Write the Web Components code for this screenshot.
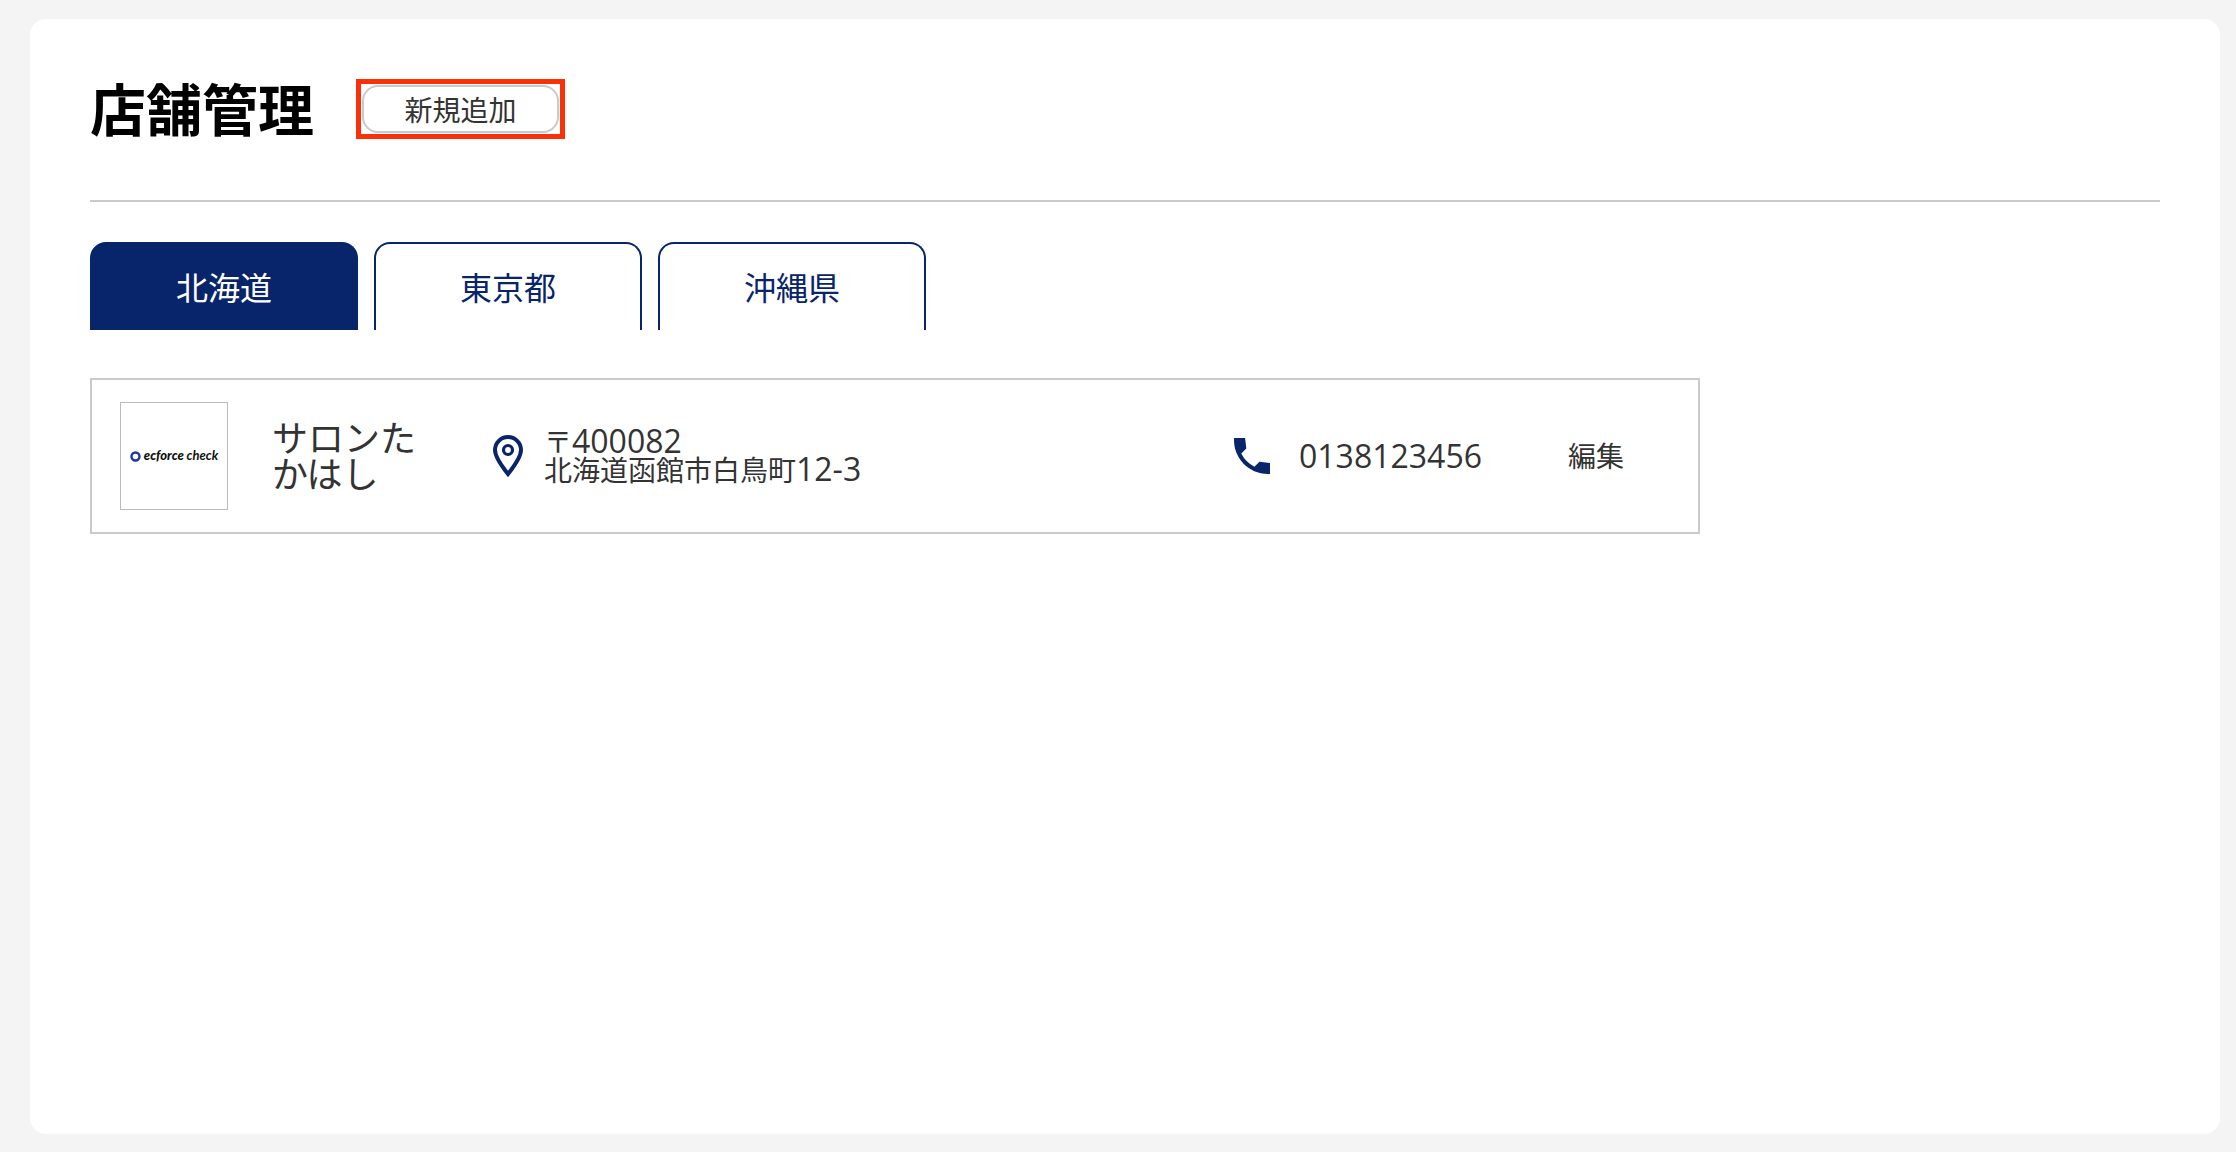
<!DOCTYPE html>
<html lang="ja">
<head>
<meta charset="utf-8">
<title>店舗管理</title>
<style>
  :root {
    --navy: #08246b;
    --line: #c9c9ce;
    --ink: #333;
    --digits: 400 32px "Open Sans", sans-serif;
  }
  body {
    margin: 0;
    background: #f4f4f4;
    color: var(--ink);
    font: 28px/28px "Noto Sans CJK JP", sans-serif;
  }
</style>
</head>
<body>
<store-panel>
  <page-header slot="header" heading="店舗管理">
    <add-button>新規追加</add-button>
  </page-header>
  <prefecture-tabs slot="tabs">
    <prefecture-tab selected>北海道</prefecture-tab>
    <prefecture-tab>東京都</prefecture-tab>
    <prefecture-tab>沖縄県</prefecture-tab>
  </prefecture-tabs>
  <store-card>
    <shop-logo slot="logo"></shop-logo>
    <span slot="name">サロンたかはし</span>
    <store-address slot="address" postal="400082" area="北海道函館市白鳥町" block="12-3"></store-address>
    <store-phone slot="phone" number="0138123456"></store-phone>
  </store-card>
</store-panel>

<script>
  const define = (name, render) => customElements.define(name, class extends HTMLElement {
    connectedCallback() {
      if (!this.shadowRoot) this.attachShadow({ mode: 'open' }).innerHTML =
        '<style>*{box-sizing:border-box}:host{box-sizing:border-box}</style>' + render(this);
    }
  });

  define('store-panel', () => `
    <style>
      :host { display: flex; flex-direction: column; min-height: calc(100vh - 37px);
        margin: 19px 16px 18px 30px; padding: 60px; border-radius: 16px; background: #fff; }
      nav { margin: 40px 0 48px; }
    </style>
    <slot name="header"></slot>
    <nav><slot name="tabs"></slot></nav>
    <main><slot></slot></main>`);

  define('page-header', el => `
    <style>
      :host { display: flex; align-items: center; gap: 42px; padding-bottom: 61px;
        border-bottom: 2px solid var(--line); }
      h1 { margin: 0; padding-bottom: 4px; color: #000; font-size: 56px; line-height: 56px; font-weight: 700; }
    </style>
    <h1>${el.getAttribute('heading')}</h1><slot></slot>`);

  define('add-button', () => `
    <style>
      :host { display: block; padding: 1px; border: 5px solid #fa3008; }
      button { display: block; width: 197px; height: 48px; padding: 0; border: 2px solid var(--line);
        border-radius: 16px; background: #fff; color: inherit; font: inherit; cursor: pointer; }
    </style>
    <button type="button"><slot></slot></button>`);

  define('prefecture-tabs', () => `
    <style>:host { display: flex; gap: 16px; }</style>
    <slot></slot>`);

  define('prefecture-tab', () => `
    <style>
      :host { display: block; width: 268px; }
      button { display: block; width: 100%; height: 88px; padding: 0 0 2px; border: 2px solid var(--navy);
        border-bottom: 0; border-radius: 16px 16px 0 0; background: #fff; color: var(--navy);
        font: inherit; font-size: 32px; cursor: pointer; }
      :host([selected]) button { background: var(--navy); color: #fff; }
    </style>
    <button type="button"><slot></slot></button>`);

  define('store-card', () => `
    <style>
      :host { display: flex; align-items: center; max-width: 1610px; padding: 22px 74px 22px 28px;
        border: 2px solid var(--line); }
      .name { width: 160px; margin-left: 44px; padding-bottom: 4px; font-size: 36px; line-height: 36px; }
      .address { flex: 1; margin-left: 61px; }
      .phone { margin-right: 86px; }
      a { padding-bottom: 2px; color: inherit; text-decoration: none; }
    </style>
    <slot name="logo"></slot>
    <div class="name"><slot name="name"></slot></div>
    <div class="address"><slot name="address"></slot></div>
    <div class="phone"><slot name="phone"></slot></div>
    <a href="#edit">編集</a>`);

  define('shop-logo', () => `
    <style>
      :host { display: flex; align-items: center; justify-content: center; gap: 3px;
        width: 108px; height: 108px; border: 1px solid #bbb; color: #111;
        font: italic 900 13px/12px Lato, sans-serif; white-space: nowrap; }
      svg { width: 11px; height: 11px; }
      span { padding-bottom: 2px; }
      b { font-weight: 700; }
    </style>
    <svg viewBox="0 0 11 11" aria-hidden="true"><circle cx="5.5" cy="5.5" r="4" fill="none" stroke="#2034a4" stroke-width="2.4"/></svg>
    <span>ecforce <b>check</b></span>`);

  define('store-address', el => `
    <style>
      :host { display: flex; align-items: center; gap: 21px; }
      svg { width: 30px; height: 42px; flex: none; }
      span { font: var(--digits); line-height: 0; }
      address { padding-bottom: 2px; font-style: normal; }
    </style>
    <svg viewBox="0 0 30 42" fill="none" stroke="#08246b" aria-hidden="true">
      <path d="M15 39C10 32.500 2 23 2 15A13 13 0 0 1 28 15C28 23 20 32.500 15 39Z" stroke-width="4"/>
      <circle cx="15" cy="15" r="4.500" stroke-width="3.200"/>
    </svg>
    <address>〒<span>${el.getAttribute('postal')}</span><br>${el.getAttribute('area')}<span>${el.getAttribute('block')}</span></address>`);

  define('store-phone', el => `
    <style>
      :host { display: flex; align-items: center; gap: 23px; }
      svg { width: 48px; height: 48px; fill: var(--navy); }
      span { font: var(--digits); line-height: 32px; }
    </style>
    <svg viewBox="0 0 24 24" aria-hidden="true"><path d="M21 15.460l-5.270-.610-2.520 2.520a15.045 15.045 0 0 1-6.590-6.590l2.530-2.530L8.540 3H3.030C2.450 13.180 10.820 21.550 21 20.970z"/></svg>
    <span>${el.getAttribute('number')}</span>`);
</script>
</body>
</html>
